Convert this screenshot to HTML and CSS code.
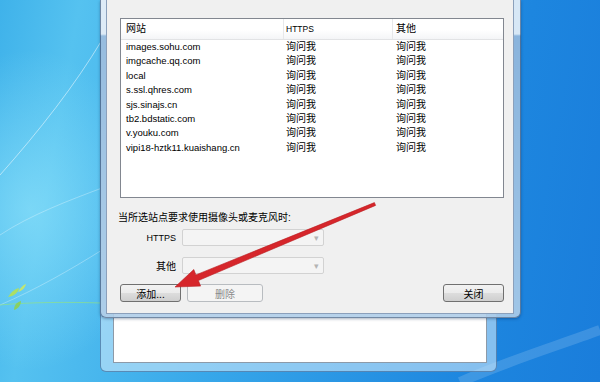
FILE: index.html
```html
<!DOCTYPE html>
<html lang="zh-CN">
<head>
    <meta charset="UTF-8">
    <title>摄像头和麦克风例外情况</title>
    <link rel="stylesheet" href="styles.css">
</head>
<body>
    <div class="desktop">
        <svg class="wallpaper" width="600" height="382" viewBox="0 0 600 382">
            <path d="M0 175 C40 130 75 85 102 40" stroke="rgba(255,255,255,0.5)" stroke-width="1" fill="none"/>
            <path d="M0 235 C30 215 70 200 102 188" stroke="rgba(255,255,255,0.3)" stroke-width="1" fill="none"/>
            <path d="M0 305 C35 290 70 270 102 250" stroke="rgba(255,255,255,0.3)" stroke-width="1" fill="none"/>
            <path d="M0 305 C30 302 70 302 102 303" stroke="rgba(150,230,120,0.6)" stroke-width="1" fill="none"/>
            <path d="M8 297 C12 291 15 289 19 288 C18 293 14 296 8 297Z" fill="#b9e34a" opacity="0.85"/>
            <path d="M14 310 C14 305 17 302 21 301 C21 305 18 309 14 310Z" fill="#8fd04a" opacity="0.85"/>
            <path d="M18 292 C20 288 23 285 26 284 C25 288 22 291 18 292Z" fill="#d2ea5a" opacity="0.85"/>
            <path d="M460 382 C510 360 560 345 600 330" stroke="rgba(255,255,255,0.15)" stroke-width="10" fill="none"/>
        </svg>

        <div class="window back-window">
            <div class="back-client"></div>
        </div>

        <div class="window dialog">
            <div class="client">
                <div class="list">
                    <div class="list-head">
                        <span class="col col-site">网站</span>
                        <span class="col col-https head-small">HTTPS</span>
                        <span class="col col-other">其他</span>
                    </div>
                    <div class="list-body">
                        <div class="row"><span class="col col-site">images.sohu.com</span><span class="col col-https">询问我</span><span class="col col-other">询问我</span></div>
                        <div class="row"><span class="col col-site">imgcache.qq.com</span><span class="col col-https">询问我</span><span class="col col-other">询问我</span></div>
                        <div class="row"><span class="col col-site">local</span><span class="col col-https">询问我</span><span class="col col-other">询问我</span></div>
                        <div class="row"><span class="col col-site">s.ssl.qhres.com</span><span class="col col-https">询问我</span><span class="col col-other">询问我</span></div>
                        <div class="row"><span class="col col-site">sjs.sinajs.cn</span><span class="col col-https">询问我</span><span class="col col-other">询问我</span></div>
                        <div class="row"><span class="col col-site">tb2.bdstatic.com</span><span class="col col-https">询问我</span><span class="col col-other">询问我</span></div>
                        <div class="row"><span class="col col-site">v.youku.com</span><span class="col col-https">询问我</span><span class="col col-other">询问我</span></div>
                        <div class="row"><span class="col col-site">vipi18-hztk11.kuaishang.cn</span><span class="col col-https">询问我</span><span class="col col-other">询问我</span></div>
                    </div>
                </div>

                <p class="caption">当所选站点要求使用摄像头或麦克风时:</p>

                <div class="form-row">
                    <label class="form-label latin">HTTPS</label>
                    <div class="combo"><span class="combo-arrow">▾</span></div>
                </div>
                <div class="form-row">
                    <label class="form-label">其他</label>
                    <div class="combo"><span class="combo-arrow">▾</span></div>
                </div>

                <div class="buttons">
                    <button class="btn btn-add">添加...</button>
                    <button class="btn btn-delete" disabled>删除</button>
                    <span class="spacer"></span>
                    <button class="btn btn-close">关闭</button>
                </div>
            </div>
        </div>

        <svg class="arrow" width="600" height="382" viewBox="0 0 600 382">
            <polygon points="374.4,202.6 375.6,205.4 198.4,280.5 200.6,286.1 175,287 193.8,269.5 195.9,274.9" fill="#d6262b" stroke="#b81c20" stroke-width="0.6" stroke-linejoin="round"/>
        </svg>
    </div>
</body>
</html>
```

FILE: styles.css
```css
:root {
    --client-bg: #f0f0f0;
    --list-border: #828790;
    --text: #000;
}
body { margin: 0; font-family: "Liberation Sans", "Noto Sans CJK SC", sans-serif; font-size: 10px; color: var(--text); }

.desktop {
    position: relative;
    width: 600px;
    height: 382px;
    overflow: hidden;
    background:
        radial-gradient(ellipse 120px 160px at 30px 210px, rgba(140,225,250,0.7), rgba(140,225,250,0) 100%),
        linear-gradient(100deg, #3fb2ea 0%, #55c2f0 12%, #38a8ea 40%, #1d86df 80%, #1a7ddb 100%);
}
.wallpaper { position: absolute; left: 0; top: 0; }
.arrow { position: absolute; left: 0; top: 0; pointer-events: none; }

/* windows on the desktop */
.window { position: absolute; box-sizing: border-box; border-radius: 0 0 6px 6px; }
.back-window {
    left: 100px; top: 0; width: 397px; height: 372px;
    padding: 0 9px 8px 12px;
    background: rgba(205,232,250,0.6);
    border: 1px solid rgba(40,80,130,0.55);
    border-top: 0;
    display: flex;
}
.back-client {
    flex: 1;
    background: #fff;
    border: 1px solid #8d9aa8;
    border-top: 0;
}

.dialog {
    left: 100px; top: 0; width: 421px; height: 318px;
    padding: 0 6px 3px 5px;
    background: linear-gradient(to bottom, rgba(225,236,246,0.95) 0, rgba(225,236,246,0.95) 34px, rgba(150,185,220,0.9) 36px, rgba(175,205,232,0.9) 100%);
    border: 1px solid rgba(40,70,110,0.6);
    border-top: 0;
    box-shadow: 0 1px 3px rgba(0,30,70,0.35);
}
.client {
    box-sizing: border-box;
    height: 314px;
    background: var(--client-bg);
    border: 1px solid #8ba0bb;
    border-top: 0;
    padding: 18px 9px 0 13px;
    display: flex;
    flex-direction: column;
}

/* list view */
.list {
    height: 180px;
    box-sizing: border-box;
    border: 1px solid var(--list-border);
    background: #fff;
}
.list-head {
    display: flex;
    height: 20px;
    align-items: center;
    border-bottom: 1px solid #e2e3e5;
    background: linear-gradient(to bottom, #ffffff 0%, #ffffff 55%, #f4f5f7 100%);
}
.list-head .col { height: 20px; line-height: 20px; border-right: 1px solid #e7e8ea; box-sizing: border-box; }
.list-head .col-other { border-right: 0; }
.head-small { font-size: 8.5px; }
.col { display: block; white-space: nowrap; overflow: hidden; box-sizing: border-box; }
.col-site { width: 163px; padding-left: 5px; }
.row .col-site { font-size: 9.5px; }
.col-https { width: 109px; padding-left: 2px; }
.col-other { flex: 1; padding-left: 3px; }
.row { display: flex; height: 14.4px; line-height: 14.4px; }

/* options */
.caption { margin: 13px 0 0 -2px; line-height: 14px; }
.form-row { display: flex; align-items: center; margin-top: 4px; }
.form-row + .form-row { margin-top: 11px; }
.form-label { width: 56px; text-align: right; margin-right: 6px; }
.latin { font-size: 9px; }
.combo {
    position: relative;
    width: 142px;
    height: 17px;
    box-sizing: border-box;
    border: 1px solid #d2d2d2;
    border-radius: 2px;
    background: #f4f4f4;
}
.combo-arrow { position: absolute; right: 4px; top: 1px; font-size: 9px; line-height: 14px; color: #b4b4b4; }

.buttons { display: flex; margin-top: 10px; }
.spacer { flex: 1; }
.btn {
    height: 18px;
    padding: 0;
    font-family: "Noto Sans CJK SC", sans-serif;
    font-size: 10px;
    line-height: 15px;
    border: 1px solid #707070;
    border-radius: 3px;
    background: linear-gradient(to bottom, #f2f2f2 0%, #ebebeb 50%, #dddddd 51%, #cfcfcf 100%);
    color: #000;
}
.btn-add { width: 61px; }
.btn-delete { width: 76px; margin-left: 6px; border-color: #b8bcc0; background: #f4f4f4; color: #8a8a8a; }
.btn-close { width: 61px; }
```
